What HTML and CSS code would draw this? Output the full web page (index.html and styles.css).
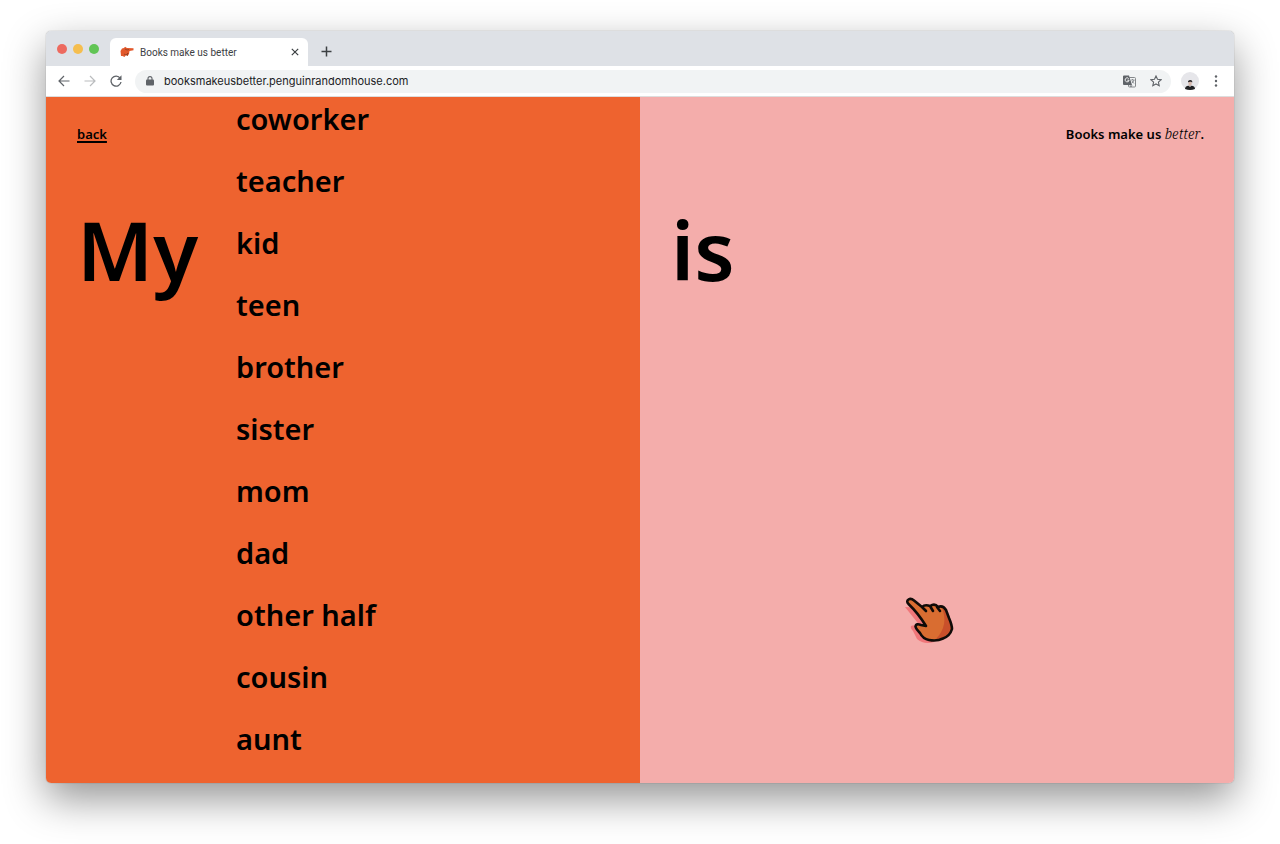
FILE: index.html
```html
<!DOCTYPE html>
<html lang="en">
<head>
<meta charset="utf-8">
<title>Books make us better</title>
<link rel="stylesheet" href="styles.css">
</head>
<body>
<div class="window">
  <header class="tabs">
    <div class="lights"><span class="light red"></span><span class="light yellow"></span><span class="light green"></span></div>
    <div class="tab">
      <svg class="favicon" viewBox="0 0 14 12" aria-hidden="true"><path d="M.5 5 2 2.500 4 2 5 .8 7 2l6.500.2v2L9.500 5 9 8 7.500 10 6 9 4.500 11 2.500 10 1 10z" fill="#e2582b"/><path d="m5 3 2 1 2-.5M4 8l2 1 2-2-1 3" fill="none" stroke="#8f3c20" stroke-width=".8"/></svg>
      <span class="tab-title">Books make us better</span>
      <button class="icon close" aria-label="Close tab"><svg width="8" height="8" viewBox="0 0 8 8"><path d="m.8.8 6.400 6.400m0-6.400L.8 7.200" stroke="#3c4043" stroke-width="1.200"/></svg></button>
    </div>
    <button class="icon plus" aria-label="New tab"><svg width="11" height="11" viewBox="0 0 11 11"><path d="M5.500.5v10M.5 5.500h10" stroke="#3c4043" stroke-width="1.500"/></svg></button>
  </header>
  <nav class="toolbar">
    <button class="icon" aria-label="Back"><svg width="12" height="12" viewBox="0 0 12 12" fill="none" stroke="#5f6368" stroke-width="1.200"><path d="M11.500 6H1.200M6 1 1 6l5 5"/></svg></button>
    <button class="icon" aria-label="Forward"><svg width="12" height="12" viewBox="0 0 12 12" fill="none" stroke="#babcbe" stroke-width="1.200"><path d="M.5 6h10.300M6 1l5 5-5 5"/></svg></button>
    <button class="icon" aria-label="Reload"><svg width="12" height="12" viewBox="0 0 12 12"><path d="M10.200 3.300A5 5 0 1 0 11 7" fill="none" stroke="#5f6368" stroke-width="1.300"/><path d="M11.500.3v4.700H6.800z" fill="#5f6368"/></svg></button>
    <div class="address">
      <svg width="8" height="10" viewBox="0 0 8 10" aria-hidden="true"><rect y="3.500" width="8" height="6" rx="1" fill="#5f6368"/><path d="M2 4V2.600a2 2 0 0 1 4 0V4" fill="none" stroke="#5f6368" stroke-width="1.100"/></svg>
      <input class="url" type="text" aria-label="Address" value="booksmakeusbetter.penguinrandomhouse.com">
      <button class="icon" aria-label="Translate"><svg width="13" height="13" viewBox="0 0 13 13"><rect x="5.500" y="2.500" width="7" height="9.500" rx="1" fill="#f1f3f4" stroke="#85888b"/><path d="M1 .5h5l3 9.500H1a1 1 0 0 1-1-1V1.500a1 1 0 0 1 1-1z" fill="#5f6368"/><path d="M5.700 3.600a2 2 0 1 0 .4 1.600H4.300" fill="none" stroke="#fff" stroke-width=".9"/><path d="M8 5h3.500M9.500 4v1m1.500 0q-.5 2-2 3m0-2 2 2.500M7 10l1 2 1-2" fill="none" stroke="#6c7074" stroke-width=".7"/></svg></button>
      <button class="icon" aria-label="Bookmark"><svg width="12" height="12" viewBox="0 0 12 12"><path d="m6 1 1.500 3.300 3.600.4-2.700 2.400.8 3.600L6 8.900l-3.200 1.800.8-3.600L.9 4.700l3.600-.4z" fill="none" stroke="#5f6368" stroke-width="1.100"/></svg></button>
    </div>
    <button class="icon" aria-label="Profile"><svg width="18" height="18" viewBox="0 0 18 18"><circle cx="9" cy="9" r="9" fill="#e6e6ea"/><path d="M4 17q0-3 3.500-3.200h3Q14 14 14 17q-5 2-10 0z" fill="#202124"/><path d="M7.500 10h3.200v2.500L9 14.300 7.500 13z" fill="#d7b9ae"/><path d="M7 10.500Q6.700 8 9.200 8t2 2.500L10 9.700 7.700 10z" fill="#2a2426"/><path d="m8 13.800 1 1 1-1" fill="none" stroke="#fff" stroke-width=".6"/></svg></button>
    <button class="icon" aria-label="Menu"><svg width="4" height="12" viewBox="0 0 4 12" fill="#5f6368"><circle cx="2" cy="1.500" r="1.200"/><circle cx="2" cy="6" r="1.200"/><circle cx="2" cy="10.500" r="1.200"/></svg></button>
  </nav>
  <main class="page">
    <section class="pane orange">
      <div class="lead">
        <a class="back" href="#">back</a>
        <h1 class="big">My</h1>
      </div>
      <ul class="words">
        <li><button class="word">coworker</button></li>
        <li><button class="word">teacher</button></li>
        <li><button class="word">kid</button></li>
        <li><button class="word">teen</button></li>
        <li><button class="word">brother</button></li>
        <li><button class="word">sister</button></li>
        <li><button class="word">mom</button></li>
        <li><button class="word">dad</button></li>
        <li><button class="word">other half</button></li>
        <li><button class="word">cousin</button></li>
        <li><button class="word">aunt</button></li>
      </ul>
    </section>
    <section class="pane pink">
      <div class="lead">
        <p class="brand">Books make us <em>better</em>.</p>
        <h2 class="big">is</h2>
      </div>
      <svg class="hand" width="54" height="50" viewBox="0 0 54 50" aria-hidden="true">
        <path d="M3 11 19 31Q13 28 9 30q-1 2 2 5l4 8q7 6 17 3l8-20-20-14z" fill="#f0777a"/>
        <path d="M6.500 8Q4 5 6.500 3.500 9 2 12 4.500L20 11Q23 8 28 10 33 7 36 11q5-2 8 3l3 8q3 7 3 11-2 7-9 9.500-6 3-14 1.500-6-1-9-7-4-4-4.500-6.500Q14 27 19 29l5 1Q16 17 6.500 8z" fill="#d96d31"/>
        <path d="M40 12q7 17-6 31 11 0 15.500-9.500Q49 26 44 15z" fill="#c9502b"/>
        <path d="M6.500 8Q4 5 6.500 3.500 9 2 12 4.500L20 11Q23 8 28 10 33 7 36 11q5-2 8 3l3 8q3 7 3 11-2 7-9 9.500-6 3-14 1.500-6-1-9-7-4-4-4.500-6.500Q14 27 19 29l5 1Q16 17 6.500 8zM20 11l4 4M28 10l3 5M35 11l3 4" fill="none" stroke="#100b08" stroke-width="2.600" stroke-linecap="round" stroke-linejoin="round"/>
      </svg>
    </section>
  </main>
</div>
</body>
</html>
```
FILE: styles.css
```css
* { box-sizing: border-box; }
body {
  margin: 0;
  min-height: 100vh;
  padding: 31px 46px 61px;
  display: flex;
  background: #fff;
  color: #000;
  font-family: "Noto Sans", sans-serif;
}
button { border: 0; padding: 0; background: none; color: inherit; font: inherit; cursor: pointer; }
.window {
  flex: 1;
  display: flex;
  flex-direction: column;
  border-radius: 5px;
  overflow: hidden;
  box-shadow: 0 0 1px rgba(0, 0, 0, .5), 0 16px 40px rgba(0, 0, 0, .42);
}
.icon { display: flex; align-items: center; justify-content: center; flex: none; }
.tabs { display: flex; align-items: center; height: 35px; background: #dee1e6; padding-left: 11px; }
.lights { display: flex; gap: 6px; width: 53px; padding-top: 1px; }
.light { width: 10px; height: 10px; border-radius: 50%; }
.red { background: #ed6a5f; }
.yellow { background: #f5be4f; }
.green { background: #61c555; }
.tab {
  align-self: flex-end;
  display: flex;
  align-items: center;
  width: 198px;
  height: 28px;
  padding: 0 9px 0 10px;
  background: #fff;
  border-radius: 6px 6px 0 0;
}
.favicon { width: 14px; height: 12px; }
.tab-title { flex: 1; padding-left: 6px; font: 10px Roboto, sans-serif; color: #3c4043; }
.plus { padding: 6px 0 0 13px; }
.toolbar {
  display: flex;
  align-items: center;
  height: 31px;
  gap: 14px;
  padding: 0 16px 0 12px;
  background: #fff;
  border-bottom: 1px solid #ddd;
}
.address {
  flex: 1;
  display: flex;
  align-items: center;
  gap: 14px;
  height: 23px;
  margin: 0 -4px 0 -1px;
  padding: 0 9px 0 11px;
  border-radius: 12px;
  background: #f1f3f4;
}
.toolbar > .icon:last-child { margin-left: 1px; }
.url {
  flex: 1;
  min-width: 0;
  margin-left: -4px;
  padding: 0;
  border: 0;
  outline: 0;
  background: none;
  font: 11px Inter, sans-serif;
  color: #202124;
}
.page { flex: 1; display: grid; grid-template-columns: 1fr 1fr; }
.pane { display: flex; }
.orange { background: #ee632f; padding-left: 31px; }
.pink { background: #f4adab; padding: 0 30px 0 31px; flex-direction: column; }
.lead { padding-top: 27px; }
.orange .lead { width: 159px; }
.back, .brand { display: block; margin: 0; font-size: 13px; line-height: 20px; font-weight: 600; }
.back { color: #000; text-decoration-thickness: 2px; text-underline-offset: 2px; }
.brand { text-align: right; }
.brand em { font-family: "Noto Serif", "Liberation Serif", serif; font-weight: 300; font-size: 14px; line-height: 18px; }
.big { margin: 50px 0 0; font-size: 82px; line-height: 110px; font-weight: 570; }
.words { list-style: none; margin: 0; padding: 3px 0 0; display: flex; flex-direction: column; gap: 24px; }
.words li { height: 38px; }
.word { font-size: 29px; line-height: 38px; font-weight: 560; }
.hand { align-self: center; margin: 292px 18px 0 0; }
```
